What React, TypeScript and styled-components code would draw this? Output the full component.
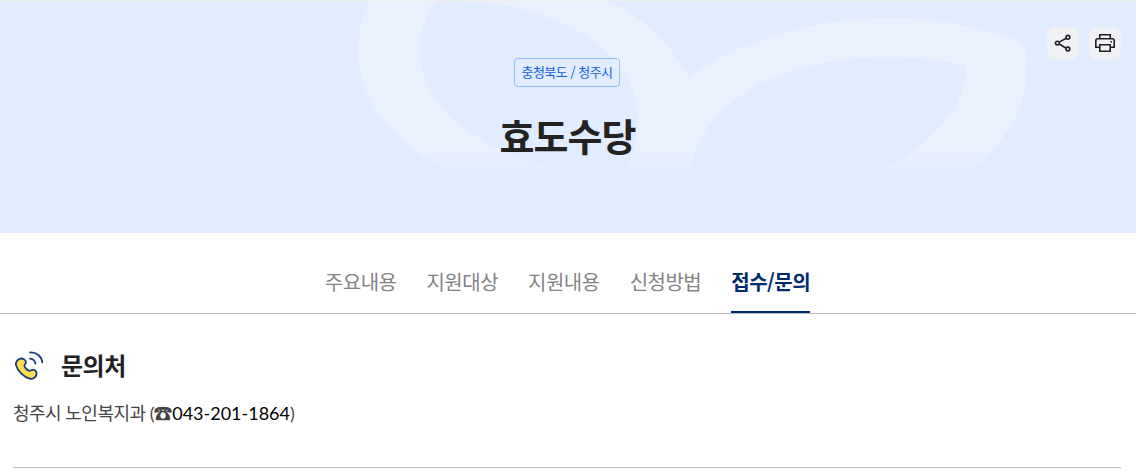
import { useState } from "react";
import styled, { createGlobalStyle } from "styled-components";

const GlobalStyle = createGlobalStyle`
  * {
    box-sizing: border-box;
  }

  body {
    margin: 0;
    background: #fff;
    color: #222;
    font-family: "Noto Sans CJK KR", sans-serif;
    letter-spacing: -0.5px;
  }
`;

const Page = styled.div`
  height: 473px;
  overflow: hidden;
`;

const Hero = styled.header`
  position: relative;
  display: flex;
  flex-direction: column;
  align-items: center;
  height: 233px;
  padding-top: 57px;
  border-top: 1px solid #efefef;
  background: #e1ecff;
`;

const HeroArt = styled.svg`
  position: absolute;
  top: 0;
  left: 50%;
  margin-left: -568px;
`;

const Region = styled.span`
  position: relative;
  width: 106px;
  height: 29px;
  margin-right: 2px;
  border: 1px solid #8ec1f9;
  border-radius: 4px;
  color: #0b61e8;
  font-size: 13px;
  line-height: 25px;
  text-align: center;
  white-space: nowrap;
`;

const Title = styled.h1`
  position: relative;
  margin: 19px 1px 0 0;
  font-size: 38px;
  font-weight: 700;
  letter-spacing: -0.9px;
  line-height: 57px;
`;

const Actions = styled.div`
  position: absolute;
  top: 26px;
  right: 15px;
  display: flex;
  gap: 10px;
`;

const ActionButton = styled.button`
  display: flex;
  align-items: center;
  justify-content: center;
  width: 32px;
  height: 32px;
  padding: 0;
  border: 0;
  border-radius: 8px;
  background: #f0f1f4;
  color: #222;
`;

const TabList = styled.nav`
  display: flex;
  justify-content: center;
  gap: 30px;
  height: 81px;
  padding: 30px 1px 0 0;
  border-bottom: 1px solid #bababa;
`;

const Tab = styled.button<{ $active: boolean }>`
  height: 50px;
  padding: 0 0 11px;
  border: 0;
  border-bottom: 2px solid ${({ $active }) => ($active ? "#002b6b" : "transparent")};
  background: none;
  color: ${({ $active }) => ($active ? "#002b6b" : "#838383")};
  font: inherit;
  font-size: 20px;
  font-weight: ${({ $active }) => ($active ? 700 : 400)};
  letter-spacing: inherit;
  line-height: 30px;
  white-space: nowrap;
`;

const Section = styled.section`
  height: 154px;
  margin: 0 15px 0 13px;
  padding-top: 35px;
  border-bottom: 1px solid #bababa;
`;

const SectionTitle = styled.h2`
  display: flex;
  align-items: flex-start;
  gap: 16px;
  height: 36px;
  margin: 0;
  font-size: 24px;
  font-weight: 700;
  line-height: 32px;

  svg {
    margin-top: 2px;
  }
`;

const Contact = styled.p`
  margin: 15px 0 0;
  color: #444;
  font-family: Lato, "Noto Sans CJK KR", sans-serif;
  font-size: 18px;
  line-height: 26px;
`;

const PhoneSymbol = styled.span`
  font-family: "Noto Sans CJK KR", sans-serif;
  font-weight: 700;
  letter-spacing: 0.2px;
  line-height: 1;
  -webkit-text-stroke: 0.5px #444;
`;

const PhoneNumber = styled.span`
  color: #000;
  letter-spacing: 0;
`;

const ShareIcon = () => (
  <svg width="20" height="20" viewBox="0 0 20 20" fill="none" stroke="currentColor" strokeWidth="1.6">
    <path d="M6.2 9.1 13.2 5.2M6.2 11l7 4.2" />
    <circle cx="4.4" cy="10.1" r="1.9" />
    <circle cx="14.9" cy="4.3" r="1.9" />
    <circle cx="14.9" cy="16" r="1.9" />
  </svg>
);

const PrintIcon = () => (
  <svg width="22" height="20" viewBox="0 0 22 20" fill="none" stroke="currentColor" strokeWidth="1.6">
    <path d="M5.8 6V1.8h10.4V6" />
    <path d="M5.5 14.2H1.8V7.7q0-1.9 1.9-1.9h14.6q1.9 0 1.9 1.9v6.5h-3.7" />
    <path d="M5.8 11.8h10.4v6.4H5.8z" />
    <path d="M16.6 8.8h1.4" />
  </svg>
);

const PhoneIcon = () => (
  <svg width="32" height="32" viewBox="0 0 32 32" fill="none" stroke="#193f7c" strokeWidth="1.8" strokeLinecap="round">
    <path
      d="M7.3 7.7C9.6 6.9 13 8.8 12.9 11.3C12.8 13.2 10.9 13.6 11.5 15.4C12.1 17 14.4 19.1 16 19.8C17.8 20.5 18.6 18.4 20.3 18.6C22.6 18.8 24 21.4 23.5 23.5C22.9 26.5 19.7 28.4 16.7 27.7C10.8 26.2 4.4 19.6 3 14.1C2.3 11.2 4.5 8.5 7.3 7.7Z"
      fill="#ffdc51"
    />
    <path d="M17 1.4c6.6-.4 11.7 4.1 12.3 10" />
    <path d="M17 7.6c3 .3 5 2.2 5.4 5" />
  </svg>
);

const LeafArt = () => (
  <HeroArt width="1136" height="174" viewBox="0 1 1136 174" aria-hidden="true">
    <defs>
      <linearGradient id="leafFade" gradientUnits="userSpaceOnUse" x1="0" y1="148" x2="0" y2="181">
        <stop offset="0" stopColor="#e9f1ff" />
        <stop offset="1" stopColor="#e1ecff" />
      </linearGradient>
    </defs>
    <path
      fill="url(#leafFade)"
      fillRule="evenodd"
      d="M370 0C359 23 355 51 361 75C371 116 406 150 456 176H691L968 174C1002 147 1027 107 1027 69Q1028 53 1024 47Q1020 41 1009 37C970 25 930 18 890 18C814 18 748 38 688 77C672 45 646 18 605 0Z
      M437 0C414 30 416 65 430 90C454 135 520 169 606 176H622C634 155 640 130 636 102C625 43 548 4 462 1Z
      M691 176C694 106 777 57 890 57Q928 57 966 66C966 111 927 149 871 176Z"
    />
  </HeroArt>
);

const tabs = ["주요내용", "지원대상", "지원내용", "신청방법", "접수/문의"];

const App = () => {
  const [activeTab, setActiveTab] = useState("접수/문의");

  return (
    <Page lang="ko">
      <GlobalStyle />
      <Hero>
        <LeafArt />
        <Region>충청북도 / 청주시</Region>
        <Title>효도수당</Title>
        <Actions>
          <ActionButton aria-label="공유하기">
            <ShareIcon />
          </ActionButton>
          <ActionButton aria-label="인쇄하기">
            <PrintIcon />
          </ActionButton>
        </Actions>
      </Hero>
      <TabList>
        {tabs.map((tab) => (
          <Tab key={tab} $active={tab === activeTab} onClick={() => setActiveTab(tab)}>
            {tab}
          </Tab>
        ))}
      </TabList>
      <Section>
        <SectionTitle>
          <PhoneIcon />
          문의처
        </SectionTitle>
        <Contact>
          청주시 노인복지과 (<PhoneSymbol>☎</PhoneSymbol>
          <PhoneNumber>043-201-1864</PhoneNumber>)
        </Contact>
      </Section>
    </Page>
  );
};

export default App;
